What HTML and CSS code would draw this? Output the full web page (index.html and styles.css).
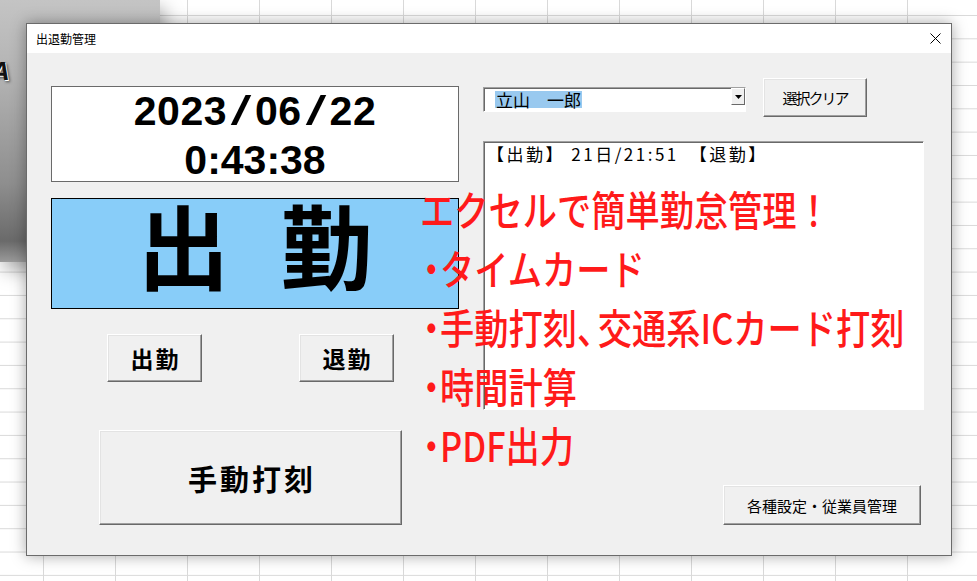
FILE: index.html
```html
<!DOCTYPE html>
<html lang="ja">
<head>
    <meta charset="UTF-8">
    <meta name="viewport" content="width=device-width, initial-scale=1.0">
    <title>出退勤管理</title>
    <link rel="stylesheet" href="styles.css">
</head>
<body>
    <div class="sheet">
        <div class="sheet-picture"><span class="picture-letter">A</span></div>

        <div class="dialog">
            <div class="titlebar">
                <span class="title">出退勤管理</span>
                <svg class="close" width="11" height="11" viewBox="0 0 11 11">
                    <path d="M0.5 0.5 L10.5 10.5 M10.5 0.5 L0.5 10.5" stroke="#000" stroke-width="1" fill="none"/>
                </svg>
            </div>

            <div class="dialog-body">
                <div class="left-col">
                    <div class="clock">
                        <div class="clock-date">2023<span class="slash">/</span>06<span class="slash">/</span>22</div>
                        <div class="clock-time">0:43:38</div>
                    </div>
                    <div class="status"><span>出</span><span>勤</span></div>
                    <div class="punch-row">
                        <button class="btn btn-punch">出勤</button>
                        <button class="btn btn-punch">退勤</button>
                    </div>
                    <button class="btn btn-manual">手動打刻</button>
                </div>

                <div class="right-col">
                    <div class="select-row">
                        <div class="combo">
                            <span class="combo-value">立山　一郎</span>
                            <span class="combo-arrow">
                                <svg width="7" height="4" viewBox="0 0 7 4"><polygon points="0,0 7,0 3.5,4" fill="#000"/></svg>
                            </span>
                        </div>
                        <button class="btn btn-clear">選択クリア</button>
                    </div>
                    <div class="log">【出勤】 21日/21:51　【退勤】</div>
                    <button class="btn btn-settings">各種設定・従業員管理</button>
                </div>
            </div>

            <!-- promo caption laid over the form -->
            <div class="promo">
                <div>エクセルで簡単勤怠管理！</div>
                <div><span class="dot">・</span>タイムカード</div>
                <div><span class="dot">・</span>手動打刻<span class="comma">、</span>交通系ICカード打刻</div>
                <div><span class="dot">・</span>時間計算</div>
                <div><span class="dot">・</span>PDF出力</div>
            </div>
        </div>
    </div>
</body>
</html>
```

FILE: styles.css
```css
body {
    margin: 0;
    font-family: "Noto Sans CJK JP", sans-serif;
    color: #000;
}

/* excel sheet behind the form */
.sheet {
    position: relative;
    width: 977px;
    height: 581px;
    overflow: hidden;
    background-color: #fff;
    background-image:
        linear-gradient(to right, #d9d9d9 1px, transparent 1px),
        linear-gradient(to bottom, #d9d9d9 1px, transparent 1px);
    background-size: 72px 100%, 100% 23.333px;
    background-position: 43px 0, 0 15px;
}
.sheet-picture {
    position: absolute;
    left: 0;
    top: 0;
    width: 160px;
    height: 262px;
    overflow: hidden;
    background: linear-gradient(to bottom, #c4c4c4 0%, #b2b2b2 30%, #8e8e8e 70%, #6a6a6a 92%, #9a9a9a 100%);
    box-shadow: 4px 8px 18px rgba(0, 0, 0, 0.35);
}
.picture-letter {
    position: absolute;
    left: -9px;
    top: 56px;
    font: italic bold 26px "Liberation Sans", sans-serif;
    color: #111;
    text-shadow: 1px 1px 0 #fff, 2px 2px 3px rgba(0, 0, 0, 0.6);
}

/* userform window */
.dialog {
    position: absolute;
    left: 26px;
    top: 23px;
    width: 926px;
    height: 533px;
    box-sizing: border-box;
    border: 1px solid #6b6b6b;
    background-color: #f0f0f0;
    box-shadow: 0 0 14px rgba(0, 0, 0, 0.35);
}
.titlebar {
    height: 29px;
    background-color: #fff;
    display: flex;
    align-items: center;
    justify-content: space-between;
    padding: 0 10px 0 9px;
    font-size: 12px;
}
.dialog-body {
    display: flex;
    padding: 25px 0 0 24px;
}
.left-col {
    width: 408px;
    padding-top: 8px;
    display: flex;
    flex-direction: column;
    align-items: flex-start;
}
.right-col {
    width: 441px;
    margin-left: 24px;
    display: flex;
    flex-direction: column;
    align-items: flex-start;
}

.clock {
    width: 408px;
    height: 96px;
    box-sizing: border-box;
    border: 1px solid #6a6a6a;
    background-color: #fff;
    text-align: center;
    font: bold 41px/49px "Liberation Sans", sans-serif;
}
.clock-date {
    letter-spacing: 0.5px;
}
.slash {
    display: inline-block;
    width: 28px;
    text-align: center;
    letter-spacing: 0;
    font-weight: normal;
    transform: scaleX(1.8);
}

.status {
    width: 408px;
    height: 111px;
    margin-top: 16px;
    box-sizing: border-box;
    border: 1px solid #000;
    background-color: #88cdf9;
    display: flex;
    justify-content: center;
    align-items: center;
    gap: 51px;
    padding-bottom: 22px;
    font-size: 92px;
    font-weight: bold;
    line-height: 92px;
}

/* windows classic buttons */
.btn {
    box-sizing: border-box;
    padding: 0;
    background-color: #f0f0f0;
    border: 1px solid;
    border-color: #fff #696969 #696969 #fff;
    box-shadow: inset -1px -1px 0 #a0a0a0, inset 1px 1px 0 #e3e3e3;
    font-family: inherit;
    color: #000;
}
.punch-row {
    display: flex;
    gap: 97px;
    margin-top: 25px;
    padding-left: 56px;
}
.btn-punch {
    width: 95px;
    height: 48px;
    font-size: 23px;
    font-weight: bold;
    letter-spacing: 2px;
    padding-left: 2px;
}
.btn-manual {
    width: 303px;
    height: 95px;
    margin-top: 48px;
    margin-left: 48px;
    font-size: 29px;
    font-weight: bold;
    letter-spacing: 3px;
    padding-left: 3px;
}

.select-row {
    display: flex;
    align-items: flex-start;
    height: 39px;
}
.combo {
    width: 263px;
    height: 25px;
    margin-top: 9px;
    box-sizing: border-box;
    border: 1px solid;
    border-color: #a0a0a0 #fff #fff #a0a0a0;
    box-shadow: inset 1px 1px 0 #696969;
    background-color: #fff;
    display: flex;
    align-items: center;
    padding-left: 11px;
}
.combo-value {
    background-color: #99c9ef;
    font-size: 17px;
    line-height: 17px;
    padding: 0 1px;
}
.combo-arrow {
    margin-left: auto;
    align-self: flex-start;
    width: 14px;
    height: 17px;
    box-sizing: border-box;
    border: 1px solid;
    border-color: #fff #696969 #696969 #fff;
    background-color: #f0f0f0;
    display: flex;
    justify-content: center;
    align-items: center;
}
.btn-clear {
    width: 104px;
    height: 39px;
    margin-left: 17px;
    font-size: 15px;
    letter-spacing: -2px;
}
.log {
    width: 441px;
    height: 269px;
    margin-top: 24px;
    box-sizing: border-box;
    border: 1px solid;
    border-color: #a0a0a0 #fff #fff #a0a0a0;
    box-shadow: inset 1px 1px 0 #696969;
    background-color: #fff;
    padding: 1px 3px;
    font-size: 17px;
    line-height: 21px;
    letter-spacing: 2.5px;
    white-space: pre;
}
.btn-settings {
    width: 198px;
    height: 40px;
    margin-top: 75px;
    margin-left: 240px;
    font-size: 15px;
}

/* red caption pasted over the screenshot */
.promo {
    position: absolute;
    left: 393px;
    top: 155px;
    color: #ff1a1a;
    font-size: 41px;
    font-weight: 500;
    line-height: 59px;
    white-space: nowrap;
    transform: scaleX(0.835);
    transform-origin: left top;
}
.dot {
    margin-left: -7px;
    letter-spacing: -10px;
}
.comma {
    letter-spacing: -16px;
}
```
